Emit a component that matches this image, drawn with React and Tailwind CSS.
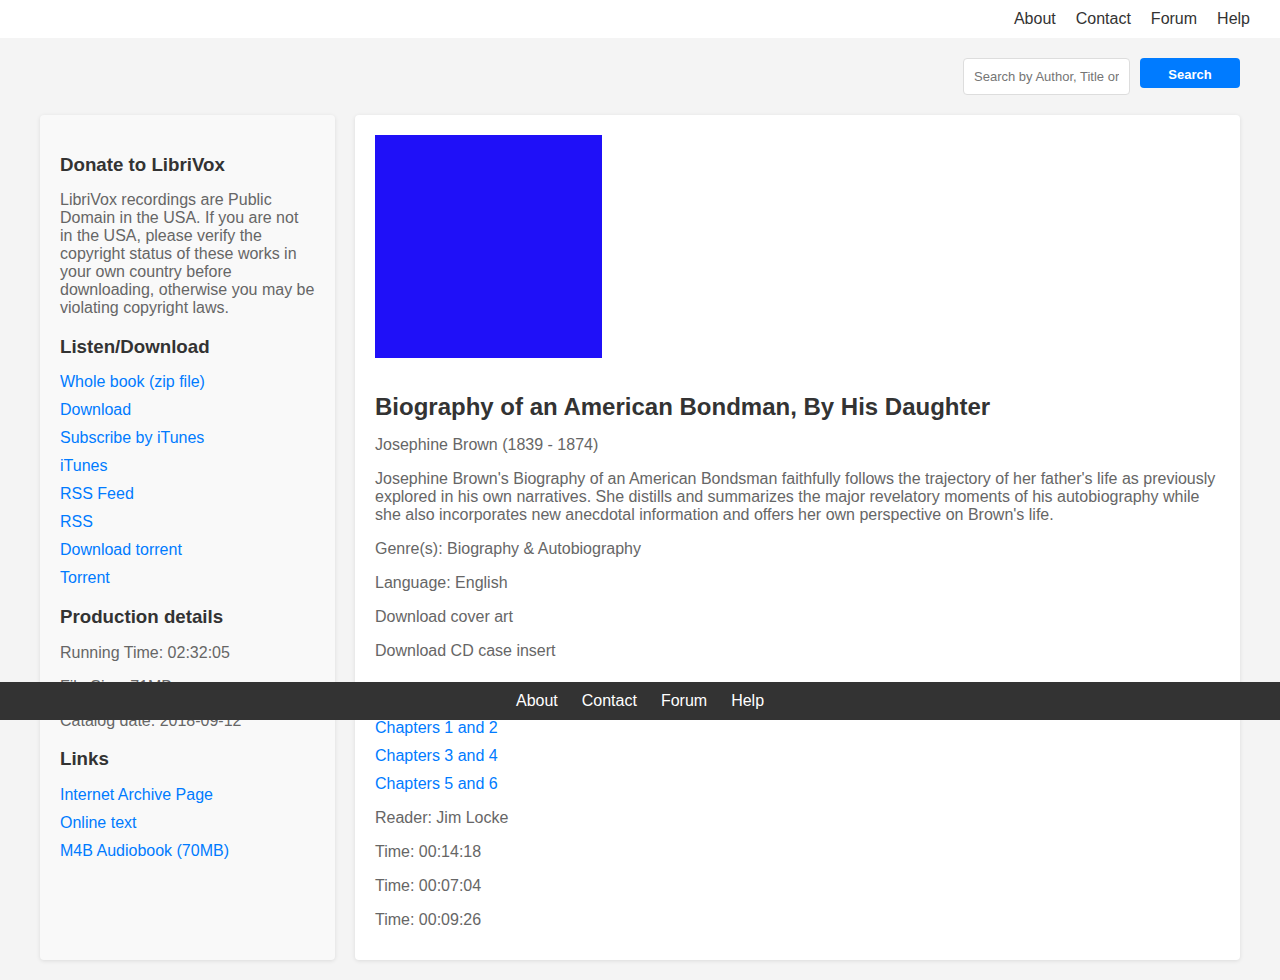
import React from "react";

const listenLinks = [
  "Whole book (zip file)",
  "Download",
  "Subscribe by iTunes",
  "iTunes",
  "RSS Feed",
  "RSS",
  "Download torrent",
  "Torrent",
];

const extraLinks = ["Internet Archive Page", "Online text", "M4B Audiobook (70MB)"];

const chapters = ["Chapters 1 and 2", "Chapters 3 and 4", "Chapters 5 and 6"];

const navItems = ["About", "Contact", "Forum", "Help"];

const Heading = ({ children }) => (
  <h3 className="text-[18.72px] leading-[21.5px] font-bold text-[#333] mt-[18.72px] mb-4">{children}</h3>
);

const LinkList = ({ items }) => (
  <ul className="mt-4 mb-4">
    {items.map((item, i) => (
      <li key={item} className={i < items.length - 1 ? "mb-[10px]" : ""}>
        <a href="#" className="text-[#007bff]">{item}</a>
      </li>
    ))}
  </ul>
);

const Sidebar = () => (
  <aside className="bg-[#f9f9f9] rounded shadow-[0_1px_4px_rgba(0,0,0,0.1)] px-5 pt-5 pb-5">
    <Heading>Donate to LibriVox</Heading>
    <p className="my-4 text-[#666]">
      LibriVox recordings are Public Domain in the USA. If you are not in the USA, please verify the copyright status of these works in your own country before downloading, otherwise you may be violating copyright laws.
    </p>
    <Heading>Listen/Download</Heading>
    <LinkList items={listenLinks} />
    <Heading>Production details</Heading>
    <p className="my-4 text-[#666]">Running Time: 02:32:05</p>
    <p className="my-4 text-[#666]">File Size: 71MB</p>
    <p className="my-4 text-[#666]">Catalog date: 2018-09-12</p>
    <Heading>Links</Heading>
    <LinkList items={extraLinks} />
  </aside>
);

const MainContent = () => (
  <main className="bg-white rounded shadow-[0_1px_4px_rgba(0,0,0,0.1)] px-5 pt-5 pb-[31px]">
    <div className="w-[227px] h-[223px] bg-[#1f10f8]" />
    <h2 className="text-[24px] leading-[28px] font-bold text-[#333] mt-[35px] mb-[15px]">
      Biography of an American Bondman, By His Daughter
    </h2>
    <p className="mb-4 text-[#666]">Josephine Brown (1839 - 1874)</p>
    <p className="mb-4 text-[#666]">
      Josephine Brown's Biography of an American Bondsman faithfully follows the trajectory of her father's life as previously explored in his own narratives. She distills and summarizes the major revelatory moments of his autobiography while she also incorporates new anecdotal information and offers her own perspective on Brown's life.
    </p>
    <p className="mb-4 text-[#666]">Genre(s): Biography &amp; Autobiography</p>
    <p className="mb-4 text-[#666]">Language: English</p>
    <p className="mb-4 text-[#666]">Download cover art</p>
    <p className="mb-4 text-[#666]">Download CD case insert</p>
    <h3 className="text-[18.72px] leading-[21.5px] font-bold text-[#333] mt-[24px]">Sections</h3>
    <ul className="mt-[13px] mb-4">
      {chapters.map((c, i) => (
        <li key={c} className={i < chapters.length - 1 ? "mb-[10px]" : ""}>
          <a href="#" className="text-[#007bff]">{c}</a>
        </li>
      ))}
    </ul>
    <p className="mb-4 text-[#666]">Reader: Jim Locke</p>
    <p className="mb-4 text-[#666]">Time: 00:14:18</p>
    <p className="mb-4 text-[#666]">Time: 00:07:04</p>
    <p className="text-[#666]">Time: 00:09:26</p>
  </main>
);

export default function App() {
  return (
    <div className="relative min-h-[980px] bg-[#f4f4f4] text-[16px] leading-[18px] font-['Liberation_Sans',Arial,sans-serif]">
      <header className="bg-white h-[38px] flex items-center justify-end pr-[30px]">
        <nav className="flex gap-5">
          {navItems.map((n) => (
            <a key={n} href="#" className="text-[#333]">{n}</a>
          ))}
        </nav>
      </header>

      <div className="px-10 pt-5 pb-5">
        <div className="flex justify-end items-start gap-[10px] mb-5">
          <input
            type="text"
            placeholder="Search by Author, Title or Reader"
            className="w-[167px] h-[37px] border border-[#ddd] rounded bg-white px-[10px] text-[13px] text-[#333] placeholder:text-[#757575] outline-none"
          />
          <button className="w-[100px] h-[30px] pt-[4px] bg-[#007bff] text-white text-[13px] font-bold rounded">
            Search
          </button>
        </div>

        <div className="grid grid-cols-[295px_1fr] gap-5">
          <Sidebar />
          <MainContent />
        </div>
      </div>

      <footer className="absolute left-0 right-0 top-[682px] h-[38px] bg-[#333] flex items-center justify-center gap-6">
        {navItems.map((n) => (
          <a key={n} href="#" className="text-white">{n}</a>
        ))}
      </footer>
    </div>
  );
}
